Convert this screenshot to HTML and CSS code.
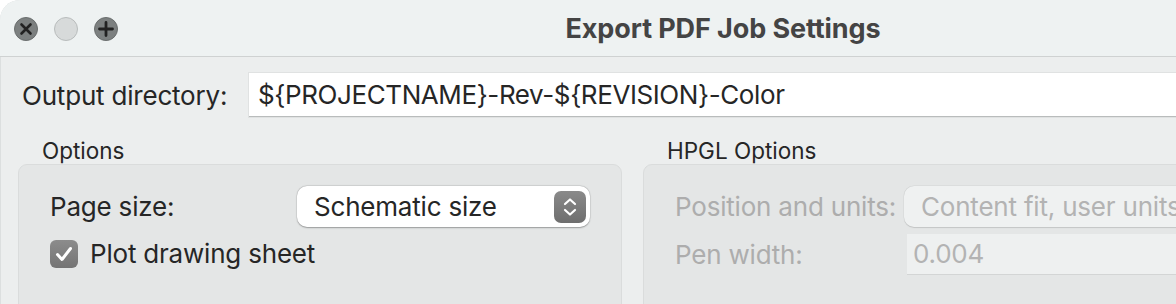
FILE: index.html
```html
<!DOCTYPE html>
<html>
<head>
    <title>Export PDF Job Settings</title>
    <link rel="stylesheet" href="styles.css">
</head>
<body>
    <div class="window">
        <div class="titlebar">
            <div class="lights">
                <span class="light close">
                    <svg width="24" height="24" viewBox="0 0 24 24"><path d="M7.5 7.5 L16.5 16.5 M16.5 7.5 L7.5 16.5" stroke="#222" stroke-width="2.6" stroke-linecap="round"/></svg>
                </span>
                <span class="light minimize"></span>
                <span class="light zoom">
                    <svg width="24" height="24" viewBox="0 0 24 24"><path d="M12 5.5 V18.5 M5.5 12 H18.5" stroke="#222" stroke-width="2.8" stroke-linecap="round"/></svg>
                </span>
            </div>
            <div class="title">Export PDF Job Settings</div>
        </div>

        <div class="content">
            <div class="output-row">
                <label class="label output-label">Output directory:</label>
                <div class="text-field">${PROJECTNAME}-Rev-${REVISION}-Color</div>
            </div>

            <div class="groups">
                <div class="group">
                    <div class="group-title">Options</div>
                    <div class="group-box">
                        <div class="form-row">
                            <span class="label">Page size:</span>
                            <div class="combo">
                                <span>Schematic size</span>
                                <span class="stepper">
                                    <svg width="32" height="32" viewBox="0 0 32 32"><path d="M11 13 L16 8.5 L21 13 M11 19 L16 23.5 L21 19" fill="none" stroke="#fff" stroke-width="2.2" stroke-linecap="round" stroke-linejoin="round"/></svg>
                                </span>
                            </div>
                        </div>
                        <div class="check-row">
                            <span class="checkbox">
                                <svg width="28" height="28" viewBox="0 0 28 28"><path d="M7.5 14.5 L12 19.5 L20.5 8.5" fill="none" stroke="#fff" stroke-width="3" stroke-linecap="round" stroke-linejoin="round"/></svg>
                            </span>
                            <span class="label">Plot drawing sheet</span>
                        </div>
                    </div>
                </div>

                <div class="group disabled">
                    <div class="group-title">HPGL Options</div>
                    <div class="group-box">
                        <div class="form-row">
                            <span class="label">Position and units:</span>
                            <div class="combo">
                                <span>Content fit, user units</span>
                            </div>
                        </div>
                        <div class="form-row pen-row">
                            <span class="label">Pen width:</span>
                            <div class="pen-field">0.004</div>
                        </div>
                    </div>
                </div>
            </div>
        </div>
    </div>
</body>
</html>
```

FILE: styles.css
```css
body {
    margin: 0;
    padding: 0;
    background-color: #ffffff;
    font-family: Inter, "Noto Sans", sans-serif;
    color: #262626;
    overflow: hidden;
}

.window {
    width: 1446px;
    height: 304px;
    background-color: #eceeee;
    border-top-left-radius: 20px;
    overflow: hidden;
    box-shadow: inset 1px 1px 0 #dcdfdf;
}

.titlebar {
    display: grid;
    grid-template-columns: 1fr auto 1fr;
    align-items: center;
    height: 56px;
    background-color: #eef2f2;
    border-bottom: 1px solid #cfd2d2;
}

.lights {
    display: flex;
    gap: 16px;
    padding-left: 14px;
    padding-top: 2px;
}

.light {
    width: 24px;
    height: 24px;
    border-radius: 50%;
    box-sizing: border-box;
    display: block;
}

.light svg {
    display: block;
}

.close,
.zoom {
    background-color: #7c8080;
    border: 1px solid #6a6e6e;
}

.close svg,
.zoom svg {
    margin: -1px;
}

.minimize {
    background-color: #d7dada;
    border: 1px solid #b8bcbc;
}

.title {
    font-size: 27px;
    font-weight: 700;
    color: #444;
    letter-spacing: -0.1px;
}

.content {
    padding: 16px 0 0 0;
}

.output-row {
    display: flex;
    align-items: center;
    padding-left: 22px;
}

.label {
    font-size: 26px;
    letter-spacing: -0.2px;
}

.output-label {
    width: 227px;
}

.text-field {
    flex: 1;
    height: 44px;
    box-sizing: border-box;
    background-color: #fff;
    border-bottom: 1px solid #b9bcbc;
    box-shadow: 0 0 0 1px #e0e2e2;
    font-size: 26px;
    letter-spacing: -0.4px;
    line-height: 43px;
    padding-left: 9px;
}

.groups {
    display: grid;
    grid-template-columns: 604px 1fr;
    gap: 21px;
    padding-left: 18px;
    margin-top: 21px;
}

.group-title {
    font-size: 22.5px;
    height: 26px;
    line-height: 26px;
    padding-left: 24px;
}

.group-box {
    background-color: #e4e6e6;
    border: 1px solid #dadcdc;
    border-radius: 9px;
    height: 160px;
    padding: 21px 31px 0 31px;
    box-sizing: border-box;
}

.form-row {
    display: flex;
    align-items: center;
    justify-content: space-between;
}

.combo {
    width: 293px;
    height: 41px;
    box-sizing: border-box;
    background-color: #fff;
    border-radius: 10px;
    box-shadow: 0 0.5px 1.5px rgba(0, 0, 0, 0.3), 0 0 0 0.5px rgba(0, 0, 0, 0.08);
    display: flex;
    align-items: center;
    justify-content: space-between;
    padding: 0 4px 0 17px;
    font-size: 26px;
    letter-spacing: -0.2px;
}

.stepper {
    width: 32px;
    height: 32px;
    border-radius: 7px;
    background: linear-gradient(#8a8a8a, #6e6e6e);
}

.stepper svg,
.checkbox svg {
    display: block;
}

.check-row {
    display: flex;
    align-items: center;
    gap: 12px;
    margin-top: 11px;
}

.checkbox {
    width: 28px;
    height: 28px;
    border-radius: 6px;
    background: linear-gradient(#8c8c8c, #747474);
}

.disabled .group-box {
    padding-right: 0;
}

.disabled .form-row {
    justify-content: flex-start;
}

.disabled .label {
    color: #adadad;
    width: 229px;
}

.disabled .combo {
    flex: 1;
    width: auto;
    background-color: #eff1f1;
    color: #b3b3b3;
    box-shadow: 0 0.5px 1px rgba(0, 0, 0, 0.12), 0 0 0 0.5px rgba(0, 0, 0, 0.05);
}

.pen-row {
    margin-top: 7px;
}

.pen-field {
    flex: 1;
    height: 41px;
    box-sizing: border-box;
    margin-left: 3px;
    background-color: #eef0f0;
    border-bottom: 1px solid #d3d5d5;
    color: #b3b3b3;
    font-size: 26px;
    letter-spacing: -0.2px;
    line-height: 40px;
    padding-left: 6px;
}
```
